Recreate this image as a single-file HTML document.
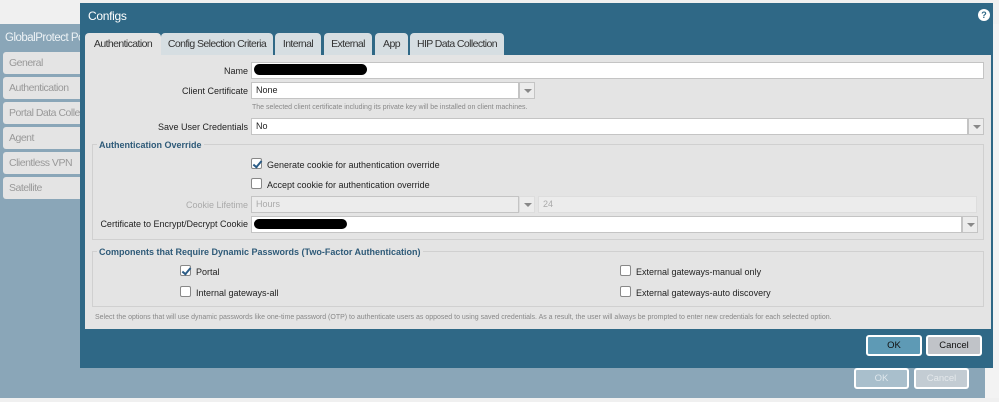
<!DOCTYPE html>
<html><head><style>
*{box-sizing:border-box;margin:0;padding:0}
body{width:999px;height:402px;position:relative;overflow:hidden;background:#f0f0f0;font-family:"Liberation Sans",sans-serif;font-size:9px;color:#222}
.a{position:absolute}
.side{background:#e4e4e4;color:#999;font-size:10.5px;letter-spacing:-0.5px;padding:5px 6px;border-radius:3px 0 0 3px;height:22px;left:3px;width:80px;white-space:nowrap;overflow:hidden}
.inp{position:absolute;background:#fff;border:1px solid #c4c4c4;height:17px;padding:2px 4px;font-size:9px}
.dd{position:absolute;width:16px;height:17px;border:1px solid #c4c4c4;background:#ececec}
.dd:after{content:"";position:absolute;left:4px;top:6px;border-left:4px solid transparent;border-right:4px solid transparent;border-top:4px solid #888}
.lbl{position:absolute;text-align:right;width:240px;font-size:9px}
.cb{position:absolute;width:11px;height:11px;border:1px solid #888;background:#fff;border-radius:2px}
.cb.on:after{content:"";position:absolute;left:3px;top:0px;width:3px;height:7px;border:solid #2b5c86;border-width:0 2px 2px 0;transform:rotate(40deg)}
.ct{position:absolute;font-size:9px}
.tab{position:absolute;top:33px;height:22px;background:#d6dee2;border-radius:4px 4px 0 0;font-size:10.5px;letter-spacing:-0.6px;padding:5px 0;text-align:center;color:#333;white-space:nowrap;overflow:hidden}
fieldset{position:absolute;border:1px solid #d0d0d0}
.leg{position:absolute;font-weight:bold;color:#2e5a78;background:#e4e4e4;padding:0 2px;font-size:9px}
.btn{position:absolute;height:21px;border:2px solid #fff;border-radius:3px;text-align:center;font-size:9.5px;line-height:17px}
</style></head><body>
<div class="a" style="left:0;top:24px;width:985px;height:374px;background:#8aa6b8"></div>
<div class="a" style="left:985px;top:24px;width:14px;height:374px;background:#f3f3f3"></div>
<div class="a" style="left:5px;top:32px;color:#eef3f6;font-size:11.5px;letter-spacing:-0.5px;white-space:nowrap">GlobalProtect Portal</div>
<div class="a side" style="top:52px">General</div>
<div class="a side" style="top:77px">Authentication</div>
<div class="a side" style="top:102px">Portal Data Collection</div>
<div class="a side" style="top:127px">Agent</div>
<div class="a side" style="top:152px">Clientless VPN</div>
<div class="a side" style="top:177px">Satellite</div>
<div class="btn" style="left:854px;top:368px;width:55px;background:#a9bfcc;color:#dfe7ec">OK</div>
<div class="btn" style="left:914px;top:368px;width:55px;background:#c3ccd3;color:#e4e8eb">Cancel</div>

<div class="a" style="left:80px;top:3px;width:913px;height:365px;background:#2f6886"></div>
<div class="a" style="left:88px;top:9px;color:#fff;font-size:12px;letter-spacing:-0.3px">Configs</div>
<div class="a" style="left:978px;top:9px;width:12px;height:12px;border-radius:50%;background:#fff;color:#2f6886;font-size:9px;font-weight:bold;text-align:center;line-height:12px">?</div>
<div class="tab" style="left:85px;width:76px;background:#e4e4e4">Authentication</div>
<div class="tab" style="left:161px;width:112px">Config Selection Criteria</div>
<div class="tab" style="left:275px;width:46px">Internal</div>
<div class="tab" style="left:324px;width:48px">External</div>
<div class="tab" style="left:375px;width:33px">App</div>
<div class="tab" style="left:410px;width:94px">HIP Data Collection</div>

<div class="a" style="left:85px;top:55px;width:906px;height:274px;background:#e4e4e4"></div>
<div class="lbl" style="left:8px;top:66px">Name</div>
<div class="inp" style="left:251px;top:62px;width:733px"></div>
<div class="a" style="left:254px;top:64px;width:113px;height:11px;background:#000;border-radius:6px"></div>
<div class="lbl" style="left:8px;top:86px">Client Certificate</div>
<div class="inp" style="left:251px;top:82px;width:268px">None</div><div class="dd" style="left:519px;top:82px"></div>
<div class="a" style="left:252px;top:104px;font-size:7px;color:#888">The selected client certificate including its private key will be installed on client machines.</div>
<div class="lbl" style="left:8px;top:122px">Save User Credentials</div>
<div class="inp" style="left:251px;top:118px;width:717px">No</div><div class="dd" style="left:968px;top:118px"></div>

<fieldset style="left:92px;top:144px;width:892px;height:96px"></fieldset>
<div class="leg" style="left:97px;top:140px">Authentication Override</div>
<div class="cb on" style="left:251px;top:158px"></div><div class="ct" style="left:267px;top:160px">Generate cookie for authentication override</div>
<div class="cb" style="left:251px;top:178px"></div><div class="ct" style="left:267px;top:180px">Accept cookie for authentication override</div>
<div class="lbl" style="left:8px;top:200px;color:#aaa">Cookie Lifetime</div>
<div class="inp" style="left:251px;top:196px;width:268px;background:#ececec;color:#aaa">Hours</div><div class="dd" style="left:519px;top:196px;border-color:#ddd"></div>
<div class="inp" style="left:538px;top:196px;width:439px;background:#ececec;color:#aaa;border-color:#ddd">24</div>
<div class="lbl" style="left:8px;top:219px">Certificate to Encrypt/Decrypt Cookie</div>
<div class="inp" style="left:251px;top:216px;width:711px"></div><div class="dd" style="left:962px;top:216px"></div>
<div class="a" style="left:254px;top:219px;width:93px;height:10px;background:#000;border-radius:5px"></div>

<fieldset style="left:92px;top:251px;width:892px;height:56px"></fieldset>
<div class="leg" style="left:97px;top:247px">Components that Require Dynamic Passwords (Two-Factor Authentication)</div>
<div class="cb on" style="left:180px;top:265px"></div><div class="ct" style="left:196px;top:267px">Portal</div>
<div class="cb" style="left:180px;top:286px"></div><div class="ct" style="left:196px;top:288px">Internal gateways-all</div>
<div class="cb" style="left:620px;top:265px"></div><div class="ct" style="left:636px;top:267px">External gateways-manual only</div>
<div class="cb" style="left:620px;top:286px"></div><div class="ct" style="left:636px;top:288px">External gateways-auto discovery</div>
<div class="a" style="left:95px;top:314px;font-size:7px;color:#888;white-space:nowrap">Select the options that will use dynamic passwords like one-time password (OTP) to authenticate users as opposed to using saved credentials. As a result, the user will always be prompted to enter new credentials for each selected option.</div>

<div class="btn" style="left:866px;top:335px;width:56px;background:#5e9ab5;color:#111">OK</div>
<div class="btn" style="left:926px;top:335px;width:56px;background:#c0c3c8;color:#111">Cancel</div>
</body></html>
